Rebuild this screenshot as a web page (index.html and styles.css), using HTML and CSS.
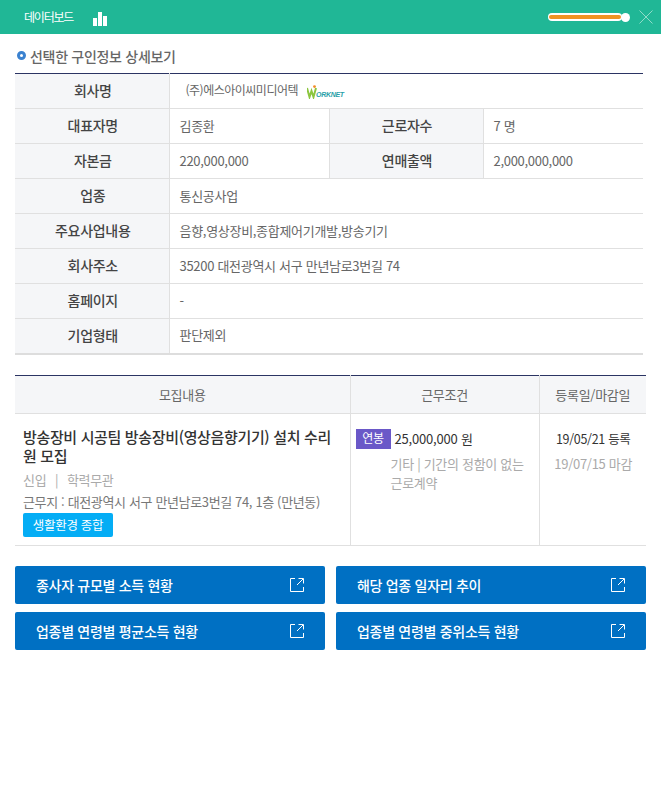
FILE: index.html
```html
<!DOCTYPE html>
<html lang="ko">
<head>
<meta charset="utf-8">
<title>구인정보 상세보기</title>
<link rel="stylesheet" href="styles.css">
</head>
<body>
<header class="topbar">
  <span class="topbar-title">데이터보드</span>
  <svg class="chart-icon" width="14" height="14" viewBox="0 0 14 14"><rect x="0" y="6" width="4" height="8" fill="#fff"/><rect x="5" y="0" width="4" height="14" fill="#fff"/><rect x="10" y="4" width="4" height="10" fill="#fff"/></svg>
  <div class="topbar-right">
    <div class="slider"><div class="slider-track"><div class="slider-fill"></div></div><div class="slider-knob"></div></div>
    <svg class="close-icon" width="14" height="14" viewBox="0 0 14 14"><path d="M0.5 0.5L13.5 13.5M13.5 0.5L0.5 13.5" stroke="#8fdcc9" stroke-width="1" fill="none"/></svg>
  </div>
</header>
<main class="content">
  <h2 class="section-title"><span class="bullet"></span>선택한 구인정보 상세보기</h2>
  <table class="info">
    <colgroup><col class="c1"><col class="c2"><col class="c3"><col class="c4"></colgroup>
    <tr><th>회사명</th><td colspan="3" class="company"><span>(주)에스아이씨미디어텍</span>
      <svg class="logo" width="38" height="14" viewBox="0 0 38 14"><path d="M0 3L2.5 12L4.5 6L6.500 12L9 3" fill="none" stroke="#8cc63f" stroke-width="2"/><circle cx="7.500" cy="1.600" r="1.400" fill="#f28c28"/><text x="9" y="12" class="logo-text">ORKNET</text></svg></td></tr>
    <tr><th>대표자명</th><td>김종환</td><th>근로자수</th><td>7 명</td></tr>
    <tr><th>자본금</th><td>220,000,000</td><th>연매출액</th><td>2,000,000,000</td></tr>
    <tr><th>업종</th><td colspan="3">통신공사업</td></tr>
    <tr><th>주요사업내용</th><td colspan="3">음향,영상장비,종합제어기개발,방송기기</td></tr>
    <tr><th>회사주소</th><td colspan="3">35200 대전광역시 서구 만년남로3번길 74</td></tr>
    <tr><th>홈페이지</th><td colspan="3">-</td></tr>
    <tr><th>기업형태</th><td colspan="3">판단제외</td></tr>
  </table>
  <table class="jobs">
    <colgroup><col class="j1"><col class="j2"><col class="j3"></colgroup>
    <tr><th>모집내용</th><th>근무조건</th><th>등록일/마감일</th></tr>
    <tr>
      <td class="job-main">
        <div class="job-title">방송장비 시공팀 방송장비(영상음향기기) 설치 수리원 모집</div>
        <div class="job-meta">신입 &nbsp;|&nbsp; 학력무관</div>
        <div class="job-place">근무지 : 대전광역시 서구 만년남로3번길 74, 1층 (만년동)</div>
        <span class="tag-env">생활환경 종합</span>
      </td>
      <td class="job-cond">
        <div class="pay"><span class="tag-pay">연봉</span><span>25,000,000 원</span></div>
        <div class="cond-note">기타 | 기간의 정함이 없는 근로계약</div>
      </td>
      <td class="job-date">
        <div class="reg">19/05/21 등록</div>
        <div class="due">19/07/15 마감</div>
      </td>
    </tr>
  </table>
  <nav class="links">
    <a class="link-btn">종사자 규모별 소득 현황<svg class="ext" width="14" height="14" viewBox="0 0 14 14"><path d="M5 .5H.5V13.5H13.5V9M7 7L13 1M8.5.5H13.5V5.5" fill="none" stroke="#fff"/></svg></a>
    <a class="link-btn">해당 업종 일자리 추이<svg class="ext" width="14" height="14" viewBox="0 0 14 14"><path d="M5 .5H.5V13.5H13.5V9M7 7L13 1M8.5.5H13.5V5.5" fill="none" stroke="#fff"/></svg></a>
    <a class="link-btn">업종별 연령별 평균소득 현황<svg class="ext" width="14" height="14" viewBox="0 0 14 14"><path d="M5 .5H.5V13.5H13.5V9M7 7L13 1M8.5.5H13.5V5.5" fill="none" stroke="#fff"/></svg></a>
    <a class="link-btn">업종별 연령별 중위소득 현황<svg class="ext" width="14" height="14" viewBox="0 0 14 14"><path d="M5 .5H.5V13.5H13.5V9M7 7L13 1M8.5.5H13.5V5.5" fill="none" stroke="#fff"/></svg></a>
  </nav>
</main>
</body>
</html>
```
FILE: styles.css
```css
* { box-sizing: border-box; }
html, body { margin: 0; padding: 0; background: #fff; }
body { font-family: "Noto Sans CJK KR", "Noto Sans", sans-serif; font-size: 13px; color: #555; letter-spacing: -0.3px; overflow: hidden; }
.topbar { height: 34px; background: #20b796; display: flex; align-items: center; padding: 0 8px 0 24px; color: #fff; }
.topbar-title { font-size: 12px; line-height: 32px; letter-spacing: -1.2px; width: 69px; }
.chart-icon { margin-top: 3px; }
.topbar-right { margin-left: auto; display: flex; align-items: center; gap: 9px; }
.slider { display: flex; align-items: center; width: 82px; }
.slider-track { width: 74px; height: 8px; background: #fff; border-radius: 4px; padding: 2px 1px; }
.slider-fill { height: 4px; background: #ef9223; border-radius: 2px; }
.slider-knob { width: 9px; height: 9px; background: #fff; border-radius: 50%; margin-left: -1px; }
.content { padding: 0 15px; }
.section-title { margin: 0; height: 39px; padding-top: 9px; padding-bottom: 5px; font-size: 14px; line-height: 20px; font-weight: 500; color: #666; display: flex; align-items: center; gap: 4px; letter-spacing: -0.3px; }
.bullet { width: 9px; height: 9px; border: 3px solid #3b82d0; border-radius: 50%; background: #fff; margin-left: 2px; }
table { border-collapse: collapse; table-layout: fixed; }
.info { width: 628px; border-top: 1px solid #2b3463; border-bottom: 2px solid #ddd; }
.c1 { width: 154px; }
.c2 { width: 160px; }
.c3 { width: 154px; }
.c4 { width: 160px; }
.info th, .info td { height: 35px; padding: 0 0 2px; border-bottom: 1px solid #e0e0e0; border-left: 1px solid #e0e0e0; }
.info th:first-child { border-left: 0; }
.info th { background: #f5f6f8; font-size: 14px; font-weight: 500; color: #444; text-align: center; padding-left: 2px; }
.info td { padding-left: 10px; text-align: left; color: #666; }
.info td.company { padding-left: 16px; font-size: 12px; letter-spacing: -0.5px; }
.logo { vertical-align: middle; margin-left: 6px; }
.logo-text { font-family: "Liberation Sans", sans-serif; font-size: 7px; font-weight: 700; font-style: italic; fill: #2a9fa8; letter-spacing: -0.3px; }
.jobs { width: 631px; margin-top: 20px; border-top: 1px solid #2b3463; }
.j1 { width: 335px; }
.j2 { width: 189px; }
.j3 { width: 107px; }
.jobs th { height: 38px; background: #f5f6f8; border-bottom: 1px solid #e0e0e0; border-left: 1px solid #e0e0e0; font-weight: 400; color: #666; padding: 0; }
.jobs th:first-child { border-left: 0; }
.jobs td { height: 132px; vertical-align: top; border-bottom: 1px solid #e0e0e0; border-left: 1px solid #e0e0e0; padding: 0; }
.jobs td:first-child { border-left: 0; }
.job-main { padding: 13px 8px 0 !important; }
.job-title { font-size: 15px; line-height: 19px; font-weight: 500; color: #333; letter-spacing: -0.35px; word-break: break-all; }
.job-meta { margin-top: 3px; line-height: 24px; color: #aaa; word-spacing: 1px; }
.job-place { line-height: 20px; font-size: 13px; color: #777; letter-spacing: -0.36px; }
.tag-env { display: block; width: 90px; height: 24px; background: #04adf5; color: #fff; border-radius: 2px; text-align: center; line-height: 24px; font-size: 12.500px; margin-top: 1px; }
.job-cond { padding: 15px 5px 0 !important; }
.pay { display: flex; align-items: center; gap: 4px; color: #333; line-height: 20px; letter-spacing: -0.200px; }
.tag-pay { width: 35px; height: 20px; background: #6a58c8; color: #fff; text-align: center; font-size: 12px; line-height: 18px; }
.cond-note { margin: 5px 0 0 35px; line-height: 19px; color: #aaa; }
.job-date { text-align: center; padding: 15px 0 0 1px !important; }
.reg { line-height: 20px; color: #333; font-size: 12.500px; }
.due { line-height: 20px; margin-top: 5px; color: #aaa; }
.links { display: grid; grid-template-columns: 310px 310px; column-gap: 11px; row-gap: 8px; margin-top: 20px; }
.link-btn { height: 38px; background: #0070c3; border-radius: 2px; color: #fff; font-size: 14px; font-weight: 500; display: flex; align-items: center; justify-content: space-between; padding: 0 21px; letter-spacing: -0.300px; }
```
